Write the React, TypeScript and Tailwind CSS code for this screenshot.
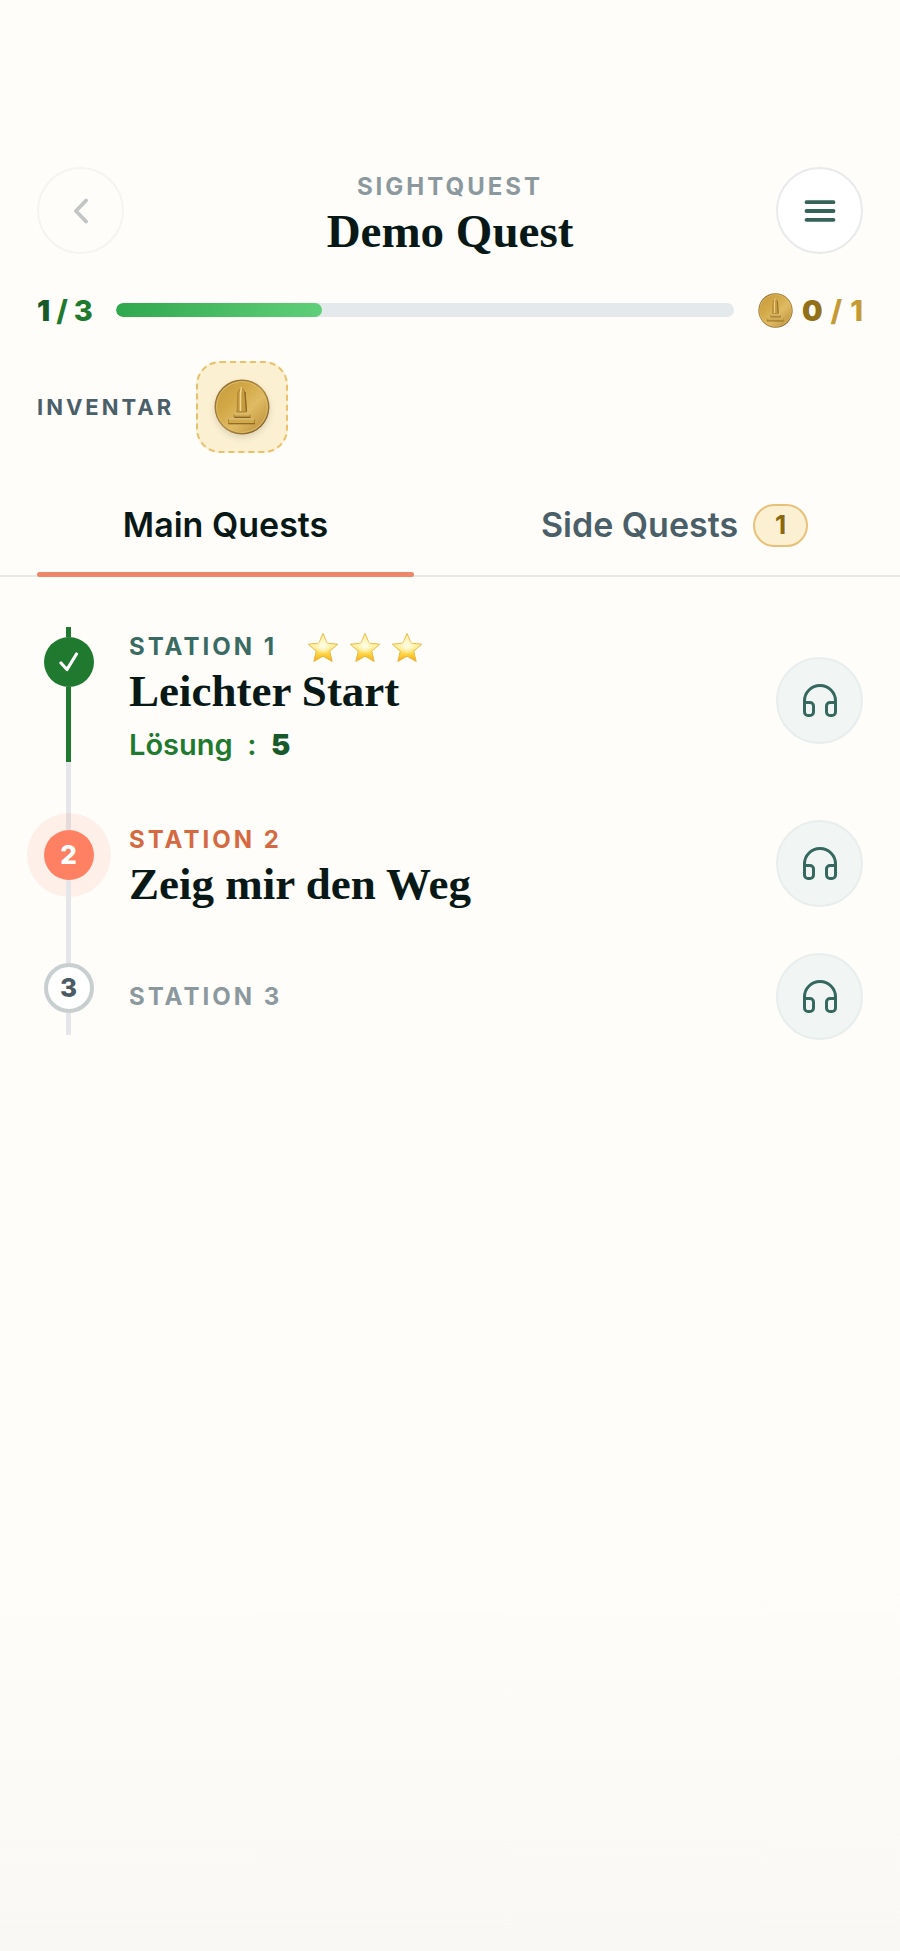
import clsx from "clsx";
import { useState } from "react";

type StationStatus = "done" | "active" | "locked";

type Station = {
  id: number;
  status: StationStatus;
  title?: string;
  stars?: number;
  solution?: string;
};

const stations: Station[] = [
  { id: 1, status: "done", title: "Leichter Start", stars: 3, solution: "5" },
  { id: 2, status: "active", title: "Zeig mir den Weg" },
  { id: 3, status: "locked" },
];

const labelColor = {
  done: "text-[#3a6b63]",
  active: "text-[#d56a42]",
  locked: "text-[#8b999f]",
};

function Coin({ id, className }: { id: string; className: string }) {
  return (
    <svg viewBox="0 0 56 56" className={className} aria-hidden="true">
      <defs>
        <linearGradient id={`${id}-face`} x1="0" y1="0" x2="1" y2="1">
          <stop offset="0" stopColor="#c79a3b" />
          <stop offset="0.35" stopColor="#d3a948" />
          <stop offset="0.6" stopColor="#e0bb64" />
          <stop offset="1" stopColor="#b98c36" />
        </linearGradient>
        <linearGradient id={`${id}-rim`} x1="0" y1="0" x2="1" y2="1">
          <stop offset="0" stopColor="#8a6526" />
          <stop offset="0.5" stopColor="#b08a40" />
          <stop offset="1" stopColor="#785825" />
        </linearGradient>
      </defs>
      <circle cx="28" cy="28" r="27.500" fill={`url(#${id}-rim)`} />
      <circle cx="28" cy="28" r="26" fill="#e0bd69" />
      <circle cx="28" cy="28" r="25" fill={`url(#${id}-face)`} />
      <path d="M24 13l3.500-5 3.500 5 1.500 20h-9.500z" fill="#c59a3f" stroke="#a17a2e" strokeWidth="0.800" />
      <path d="M27.500 8l-1 6v18" fill="none" stroke="#f0d58c" strokeWidth="1.600" />
      <path d="M31 13l1.500 19.500" stroke="#8a6623" strokeWidth="1.200" />
      <path d="M20 35h16v3H20zM14.500 40h26v4.500h-26z" fill="#d2a84d" stroke="#a17a2e" strokeWidth="0.800" />
      <path d="M20 35h16M14.500 40h26" stroke="#f0d58c" />
      <path d="M20.500 38.400h16M14.500 44.800h26.400" stroke="#85611f" />
    </svg>
  );
}

function Star() {
  return (
    <svg viewBox="0 0 32 31" className="h-[31px] w-8" aria-hidden="true">
      <defs>
        <linearGradient id="star-fill" x1="0" y1="0" x2="0" y2="1">
          <stop offset="0" stopColor="#fff6c4" />
          <stop offset="0.5" stopColor="#fff0a0" />
          <stop offset="0.75" stopColor="#fdd23c" />
          <stop offset="1" stopColor="#f2a91c" />
        </linearGradient>
        <radialGradient id="star-glow" cx="0.5" cy="0.5" r="0.5">
          <stop offset="0" stopColor="#fffdec" />
          <stop offset="1" stopColor="#fffdec" stopOpacity="0" />
        </radialGradient>
      </defs>
      <path
        d="M16 1.500l4.200 9.700 10.500 1-8 7 2.500 10.300L16 24.200 6.800 29.500l2.500-10.300-8-7 10.500-1z"
        fill="url(#star-fill)"
        stroke="#e9b93f"
        strokeWidth="1"
        strokeLinejoin="round"
      />
      <circle cx="16" cy="14" r="8" fill="url(#star-glow)" />
    </svg>
  );
}

function Headphones() {
  return (
    <svg
      viewBox="0 0 36 36"
      className="size-9"
      fill="none"
      stroke="currentColor"
      strokeWidth="3"
      strokeLinecap="round"
      strokeLinejoin="round"
      aria-hidden="true"
    >
      <path d="M2.500 20v-2a15.500 15.500 0 0 1 31 0v2" />
      <path d="M2.500 19.500h5.500a3.500 3.500 0 0 1 3.500 3.500v6a3.500 3.500 0 0 1-3.500 3.500h-2a3.500 3.500 0 0 1-3.500-3.500z" />
      <path d="M33.500 19.500H28a3.500 3.500 0 0 0-3.500 3.500v6a3.500 3.500 0 0 0 3.500 3.500h2a3.500 3.500 0 0 0 3.500-3.500z" />
    </svg>
  );
}

function StationNode({ station }: { station: Station }) {
  if (station.status === "done") {
    return (
      <span className="flex size-[50px] shrink-0 items-center justify-center rounded-full bg-[#1f7a30] text-white">
        <svg viewBox="0 0 20 20" className="size-5" fill="none" aria-label="Done">
          <path
            d="M2 11l6 6.500L17.500 2"
            stroke="currentColor"
            strokeWidth="3.200"
            strokeLinecap="round"
            strokeLinejoin="round"
          />
        </svg>
      </span>
    );
  }

  return (
    <span
      className={clsx(
        "flex size-[50px] shrink-0 items-center justify-center rounded-full text-[26px] leading-none font-extrabold",
        station.status === "active" &&
          "bg-[#ff8062] text-white shadow-[0_0_0_17px_rgba(255,128,98,0.1)]",
        station.status === "locked" &&
          "border-4 border-[#c7cfd0] bg-white text-[#4b5b64]",
      )}
    >
      {station.id}
    </span>
  );
}

function StationRow({ station, isLast }: { station: Station; isLast: boolean }) {
  const isDone = station.status === "done";

  return (
    <li className="flex gap-[29px]">
      <div className="flex w-[63px] shrink-0 flex-col items-center">
        <span className={clsx("h-[10px] w-[5px]", isDone ? "bg-[#1f7a30]" : "bg-[#e4e6e9]")} />
        <StationNode station={station} />
        {isDone && <span className="h-[75px] w-[5px] bg-[#1f7a30]" />}
        <span className={clsx("w-[5px] bg-[#e4e6e9]", isLast ? "h-[22px]" : "flex-1")} />
      </div>

      <div className={clsx("flex min-w-0 flex-1 items-center", !isLast && "pb-[46px]")}>
        <div className={clsx("min-w-0 flex-1", station.title && "pt-1")}>
          <div className="flex h-8 items-center gap-[30px]">
            <p
              className={clsx(
                "text-2xl leading-8 font-bold tracking-[3px] uppercase",
                labelColor[station.status],
              )}
            >
              Station {station.id}
            </p>
            {station.stars && (
              <div className="flex gap-[10px]" aria-label={`${station.stars} stars`}>
                {Array.from({ length: station.stars }, (_, i) => (
                  <Star key={i} />
                ))}
              </div>
            )}
          </div>
          {station.title && (
            <h2 className="mt-[5px] font-['Liberation_Serif',serif] text-[45px] leading-[46px] font-bold text-[#081816]">
              {station.title}
            </h2>
          )}
          {station.solution && (
            <p className="mt-[10px] pb-2 text-[29px] leading-[42px] font-semibold text-[#1f7a30]">
              Lösung&nbsp; :&nbsp; <strong className="font-black text-[#17592a]">{station.solution}</strong>
            </p>
          )}
        </div>
        <button
          type="button"
          aria-label={`Listen to station ${station.id}`}
          className="flex size-[87px] shrink-0 items-center justify-center rounded-full border-2 border-[#e7eeed] bg-[#f1f6f5] text-[#35685e]"
        >
          <Headphones />
        </button>
      </div>
    </li>
  );
}

export default function App() {
  const [tab, setTab] = useState<"main" | "side">("main");
  const done = stations.filter((s) => s.status === "done").length;

  return (
    <div className="min-h-screen bg-[#fefdf9] bg-linear-to-b from-[#fefdf9] from-80% to-[#f9f8f4] pt-[167px] font-['Inter',sans-serif]">
      <header className="px-[37px]">
        <div className="flex items-center justify-between">
          <button
            type="button"
            disabled
            aria-label="Back"
            className="flex size-[87px] items-center justify-center rounded-full border-2 border-[#f4f4f1] text-[#c1c5c5]"
          >
            <svg viewBox="0 0 16 26" className="h-[26px] w-4" fill="none" aria-hidden="true">
              <path
                d="M13 2.500L3 13l10 10.500"
                stroke="currentColor"
                strokeWidth="3.800"
                strokeLinecap="round"
                strokeLinejoin="round"
              />
            </svg>
          </button>
          <div className="pt-1 text-center">
            <p className="text-2xl leading-8 font-bold tracking-[3px] text-[#8b999f] uppercase">
              Sightquest
            </p>
            <h1 className="mt-[5px] font-['Liberation_Serif',serif] text-[47px] leading-[46px] font-bold text-[#081816]">
              Demo Quest
            </h1>
          </div>
          <button
            type="button"
            aria-label="Menu"
            className="flex size-[87px] items-center justify-center rounded-full border-2 border-[#e8eaeb] bg-white text-[#35625b]"
          >
            <svg viewBox="0 0 32 22" className="h-[22px] w-8" fill="none" aria-hidden="true">
              <path
                d="M2.500 2.200h27M2.500 11h27M2.500 19.800h27"
                stroke="currentColor"
                strokeWidth="3.800"
                strokeLinecap="round"
              />
            </svg>
          </button>
        </div>

        <div className="mt-[35px] flex h-[42px] items-center">
          <p className="flex w-[79px] gap-1.5 text-[29px] leading-none font-extrabold text-[#1f7a30]">
            <span className="font-black text-[#17592a]">{done}</span>
            <span>/</span>
            <span>{stations.length}</span>
          </p>
          <div
            role="progressbar"
            aria-label="Stations completed"
            aria-valuenow={done}
            aria-valuemax={stations.length}
            className="h-[14px] flex-1 overflow-hidden rounded-full bg-[#e4e9eb]"
          >
            <div
              className="h-full rounded-full bg-linear-to-r from-[#2fa84d] to-[#5fd079]"
              style={{ width: `${(done / stations.length) * 100}%` }}
            />
          </div>
          <div className="ml-6 flex items-center gap-[9px]">
            <Coin id="coin-small" className="size-[35px]" />
            <p className="flex gap-2 text-[29px] leading-none font-extrabold text-[#c59a35]">
              <span className="font-black text-[#927019]">0</span>
              <span>/</span>
              <span>1</span>
            </p>
          </div>
        </div>

        <div className="mt-[30px] flex items-center gap-[22px]">
          <p className="text-[22px] leading-8 font-bold tracking-[3px] text-[#4b5f69] uppercase">
            Inventar
          </p>
          <div className="flex size-[92px] items-center justify-center rounded-3xl border-2 border-dashed border-[#e9c16d] bg-[#fcf0d2]">
            <Coin id="coin-large" className="size-14 drop-shadow-md" />
          </div>
        </div>
      </header>

      <nav
        role="tablist"
        className="mt-[25px] flex h-[99px] gap-[72px] border-b-2 border-[#e7e9e6] px-[37px]"
      >
        <button
          type="button"
          role="tab"
          aria-selected={tab === "main"}
          onClick={() => setTab("main")}
          className="-mb-0.5 flex flex-1 flex-col items-center text-[#081816]"
        >
          <span className="flex flex-1 items-center text-[34px] leading-none font-semibold">
            Main Quests
          </span>
          <span className={clsx("h-[5px] w-full rounded-full", tab === "main" && "bg-[#f08669]")} />
        </button>
        <button
          type="button"
          role="tab"
          aria-selected={tab === "side"}
          onClick={() => setTab("side")}
          className="-mb-0.5 flex flex-1 flex-col items-center text-[#4b5f69]"
        >
          <span className="flex flex-1 items-center gap-[15px] text-[34px] leading-none font-semibold">
            Side Quests
            <span className="flex h-[43px] w-[55px] items-center justify-center rounded-full border-2 border-[#e9c07a] bg-[#fcf0d2] text-[26px] font-bold text-[#8a6712]">
              1
            </span>
          </span>
          <span className={clsx("h-[5px] w-full rounded-full", tab === "side" && "bg-[#f08669]")} />
        </button>
      </nav>

      <ol className="px-[37px] pt-[50px]">
        {stations.map((station, i) => (
          <StationRow
            key={station.id}
            station={station}
            isLast={i === stations.length - 1}
          />
        ))}
      </ol>
    </div>
  );
}
